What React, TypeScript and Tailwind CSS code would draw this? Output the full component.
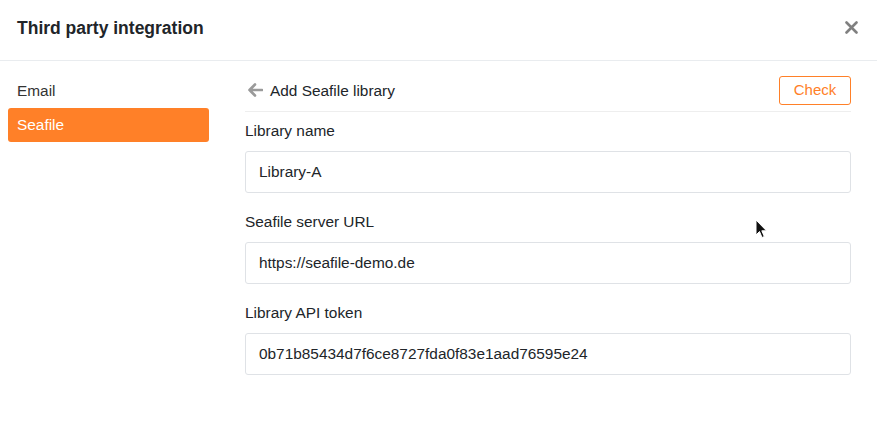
import React from "react";

const fields = [
  { label: "Library name", value: "Library-A" },
  { label: "Seafile server URL", value: "https://seafile-demo.de" },
  { label: "Library API token", value: "0b71b85434d7f6ce8727fda0f83e1aad76595e24" },
];

export default function App() {
  return (
    <div className="relative h-[436px] w-[877px] overflow-hidden bg-white font-['Liberation_Sans',Arial,sans-serif] text-[#212529]">
      <div className="flex h-[61px] items-center justify-between border-b border-[#e9ecef] pl-[17px] pr-[19px]">
        <h1 className="pb-[4px] text-[17.5px] font-bold text-[#212529]">Third party integration</h1>
        <button className="mb-[6px] text-[#808080]">
          <svg width="13" height="13" viewBox="0 0 13 13">
            <path d="M1.5 1.5 L11.5 11.5 M11.5 1.5 L1.5 11.5" stroke="currentColor" strokeWidth="2.6" strokeLinecap="round" />
          </svg>
        </button>
      </div>

      <div className="flex">
        <nav className="ml-[8px] flex w-[201px] flex-col pt-[19px] text-[15.4px]">
          <div className="flex h-[22px] items-center px-[9px] text-[#333]">Email</div>
          <div className="mt-[6px] flex h-[34px] items-center rounded-[3px] bg-[#ff8028] px-[9px] text-white">Seafile</div>
        </nav>

        <main className="ml-[36px] w-[606px] pt-[15px]">
          <div className="flex h-[36px] items-center justify-between border-b border-[#eeeeee] pb-[6px]">
            <div className="flex items-center gap-[7px] text-[15.4px] text-[#212529]">
              <svg width="16" height="14" viewBox="0 0 16 14" className="ml-[2px] text-[#9a9a9a]">
                <path d="M8 1.5 L2.5 7 L8 12.5 M2.5 7 H15" fill="none" stroke="currentColor" strokeWidth="2.6" strokeLinejoin="round" strokeLinecap="round" />
              </svg>
              <span>Add Seafile library</span>
            </div>
            <button className="flex h-[29px] w-[72px] items-center justify-center rounded-[3px] border border-[#ff8028] text-[15px] text-[#ff8028]">
              Check
            </button>
          </div>

          <div className="flex flex-col">
            {fields.map((f, i) => (
              <div key={f.label} className={i === 0 ? "pt-[9px]" : "pt-[19px]"}>
                <label className="block h-[21px] text-[15.4px] leading-[20px] text-[#212529]">{f.label}</label>
                <div className="mt-[9px] flex h-[42px] items-center rounded-[3px] border border-[#dfe2e6] px-[13px] text-[15.4px] text-[#212529]">
                  {f.value}
                </div>
              </div>
            ))}
          </div>
        </main>
      </div>

      <svg className="absolute left-[755px] top-[219px]" width="13" height="20" viewBox="0 0 13 20">
        <path d="M1 1 L1 16 L4.5 12.5 L7 18.5 L9.3 17.5 L6.8 11.8 L11.5 11.8 Z" fill="#111" stroke="#fff" strokeWidth="1" />
      </svg>
    </div>
  );
}
